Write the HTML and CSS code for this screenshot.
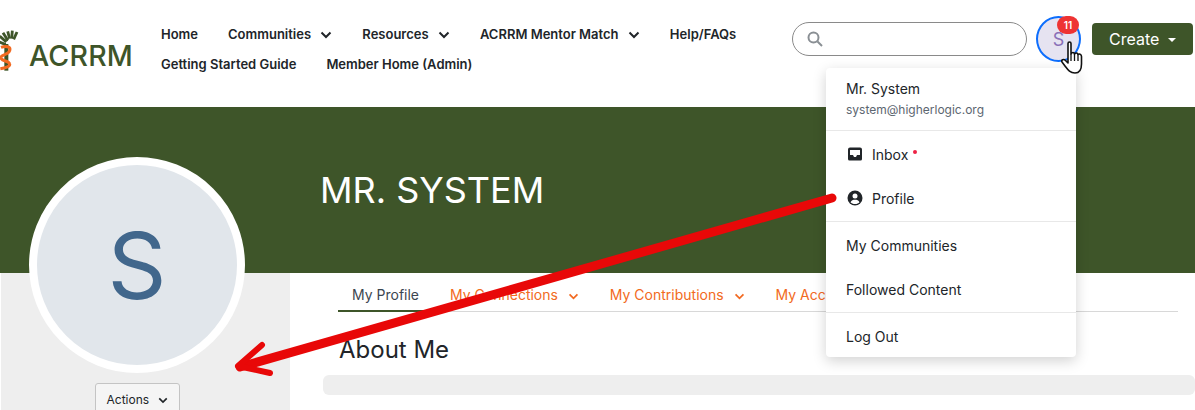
FILE: index.html
```html
<!DOCTYPE html>
<html lang="en">
<head>
<meta charset="UTF-8">
<title>Mr. System</title>
<link rel="stylesheet" href="styles.css">
</head>
<body>
<div class="page">
  <div class="header">
    <a class="logo" href="#">
      <svg width="48" height="64" viewBox="0 0 48 64">
        <g stroke="#3e5529" stroke-width="4.2" fill="none">
          <path d="M13 21 L1 16"/><path d="M14 17 L4 8"/><path d="M16 14 L9 3"/><path d="M19 12 L16 1"/>
          <path d="M22 12 L23 0"/><path d="M25 13 L30 2"/><path d="M17 14 L13 12"/>
        </g>
        <rect x="11" y="20" width="6" height="40" fill="#3e5529"/>
        <path d="M6 25 C14 22 21 24 19 30 C17 37 5 35 6 41 C7 46 18 45 19 50 C20 54 11 56 5 57" stroke="#f26a21" stroke-width="4.5" fill="none"/>
      </svg>
      <span class="logo-text">ACRRM</span>
    </a>
    <ul class="nav">
      <li><a href="#">Home</a></li>
      <li><a href="#">Communities <svg class="chev" width="12" height="8" viewBox="0 0 12 8"><path d="M1.5 1.5 L6 6 L10.5 1.5"/></svg></a></li>
      <li><a href="#">Resources <svg class="chev" width="12" height="8" viewBox="0 0 12 8"><path d="M1.5 1.5 L6 6 L10.5 1.5"/></svg></a></li>
      <li><a href="#">ACRRM Mentor Match <svg class="chev" width="12" height="8" viewBox="0 0 12 8"><path d="M1.5 1.5 L6 6 L10.5 1.5"/></svg></a></li>
      <li><a href="#">Help/FAQs</a></li>
      <li><a href="#">Getting Started Guide</a></li>
      <li><a href="#">Member Home (Admin)</a></li>
    </ul>
    <div class="search">
      <svg width="16" height="16" viewBox="0 0 16 16" fill="none" stroke="#8a8f94" stroke-width="2"><circle cx="6.5" cy="6.5" r="5"/><path d="M10.5 10.5 L15 15"/></svg>
    </div>
    <div class="user">
      <div class="user-circle">S</div>
      <span class="badge">11</span>
    </div>
    <button class="create">Create <span class="caret"></span></button>
  </div>

  <div class="banner">
    <h1>MR. SYSTEM</h1>
  </div>

  <div class="content">
    <div class="sidebar">
      <button class="actions">Actions <svg class="chev" width="10" height="7" viewBox="0 0 12 8"><path d="M1.5 1.5 L6 6 L10.5 1.5"/></svg></button>
    </div>
    <div class="main">
      <ul class="tabs">
        <li class="active"><a href="#">My Profile</a></li>
        <li><a href="#">My Connections <svg class="chev" width="11" height="7" viewBox="0 0 12 8"><path d="M1.5 1.5 L6 6 L10.5 1.5"/></svg></a></li>
        <li><a href="#">My Contributions <svg class="chev" width="11" height="7" viewBox="0 0 12 8"><path d="M1.5 1.5 L6 6 L10.5 1.5"/></svg></a></li>
        <li><a href="#">My Account <svg class="chev" width="11" height="7" viewBox="0 0 12 8"><path d="M1.5 1.5 L6 6 L10.5 1.5"/></svg></a></li>
      </ul>
      <h2>About Me</h2>
      <div class="about-box"></div>
    </div>
  </div>

  <div class="big-avatar">S</div>

  <div class="menu">
    <div class="menu-head">
      <div class="menu-name">Mr. System</div>
      <div class="menu-mail">system@higherlogic.org</div>
    </div>
    <div class="menu-group">
      <a href="#">
        <svg width="16" height="16" viewBox="0 0 16 16"><path fill="#212529" fill-rule="evenodd" d="M3 1.5h10a2 2 0 0 1 2 2V13a1.5 1.5 0 0 1-1.5 1.5h-11A1.5 1.5 0 0 1 1 13V3.500a2 2 0 0 1 2-2zM3 4v5h3l1 2h2l1-2h3V4z"/></svg>
        Inbox <span class="dot"></span>
      </a>
      <a href="#">
        <svg width="16" height="16" viewBox="0 0 16 16"><circle cx="8" cy="8" r="7.500" fill="#212529"/><circle cx="8" cy="6" r="2.500" fill="#fff"/><path d="M3.500 12.200C4.500 10.300 6 9.800 8 9.800s3.500.5 4.500 2.400C11.500 13.300 10 14 8 14s-3.500-.7-4.500-1.800z" fill="#fff"/></svg>
        Profile
      </a>
    </div>
    <div class="menu-group">
      <a href="#">My Communities</a>
      <a href="#">Followed Content</a>
    </div>
    <div class="menu-group">
      <a href="#">Log Out</a>
    </div>
  </div>

  <!-- annotations drawn on top of the screenshot -->
  <svg class="arrow" width="1195" height="410" viewBox="0 0 1195 410">
    <path d="M832 198 L240 367" stroke="#e80808" stroke-width="9" stroke-linecap="round" fill="none"/>
    <path d="M262 345 L238 366 L270 373" stroke="#e80808" stroke-width="6" stroke-linecap="round" stroke-linejoin="round" fill="none"/>
  </svg>
  <svg class="hand" width="26" height="34" viewBox="0 0 26 34">
    <path d="M7 2.500 C7 .5 10 .5 10 2.500 V13 C11 11 13 11 13.500 13 C14.500 11.500 16.500 11.500 17 13.500 C18 12.500 20.500 13 20.500 15.500 V23 C20.500 28 18.500 32 14 32 C9 32 7 29 4 25 L1 21 C0 19 2.500 17.500 4.500 19.500 L7 22 Z" fill="#fff" stroke="#111" stroke-width="1.600" stroke-linejoin="round"/>
    <path d="M10 13 V20 M13.500 13 V20 M17 13.500 V20" stroke="#111" stroke-width="1.300" fill="none"/>
  </svg>
</div>
</body>
</html>
```
FILE: styles.css
```css
* {
  box-sizing: border-box;
}
html, body {
  margin: 0;
  padding: 0;
  height: 410px;
  overflow: hidden;
}
body {
  font-family: Inter, "Liberation Sans", sans-serif;
  color: #212529;
  background: #fff;
}
a {
  text-decoration: none;
  color: inherit;
}
ul {
  list-style: none;
  margin: 0;
  padding: 0;
}
.page {
  position: relative;
  width: 1195px;
  height: 410px;
  overflow: hidden;
}
.chev {
  fill: none;
  stroke: currentColor;
  stroke-width: 2;
  margin-left: 6px;
}

/* header */
.header {
  height: 107px;
  display: flex;
  align-items: flex-start;
}
.logo {
  width: 161px;
  height: 107px;
  display: flex;
  align-items: flex-start;
  padding-top: 26px;
}
.logo svg {
  flex: none;
  margin-left: -3px;
  width: 32px;
  height: 52px;
}
.logo-text {
  font-size: 28.5px;
  font-weight: 500;
  color: #3e5529;
  margin-top: 14px;
  letter-spacing: 0.2px;
  line-height: 32px;
}
.nav {
  width: 631px;
  padding-top: 19px;
  display: flex;
  flex-wrap: wrap;
  column-gap: 30px;
  font-size: 13px;
  font-weight: 600;
  line-height: 30px;
}
.search {
  width: 235px;
  height: 34px;
  margin-top: 22px;
  border: 1px solid #8a8a8a;
  border-radius: 17px;
  display: flex;
  align-items: center;
  padding-left: 14px;
}
.user {
  position: relative;
  margin: 16px 11px 0 9px;
}
.user-circle {
  width: 45px;
  height: 46px;
  border: 2px solid #0d6efd;
  border-radius: 50%;
  background: #e6e3f1;
  color: #8a70b8;
  font-size: 18px;
  display: flex;
  align-items: center;
  justify-content: center;
}
.badge {
  position: absolute;
  top: 0;
  left: 21px;
  width: 22px;
  height: 18px;
  border-radius: 9px;
  background: #ee3333;
  color: #fff;
  font-size: 10px;
  font-weight: 600;
  line-height: 18px;
  text-align: center;
}
.create {
  width: 101px;
  height: 32px;
  margin-top: 23px;
  border: 0;
  border-radius: 4px;
  background: #3e5529;
  color: #fff;
  font-family: inherit;
  font-size: 16px;
}
.caret {
  display: inline-block;
  margin-left: 4px;
  vertical-align: 3px;
  border-top: 4px solid #fff;
  border-left: 4px solid transparent;
  border-right: 4px solid transparent;
}

/* banner */
.banner {
  height: 166px;
  background: #3e5529;
  padding: 61px 0 0 320px;
}
.banner h1 {
  margin: 0;
  color: #fff;
  font-size: 36px;
  font-weight: 400;
  line-height: 44px;
}

/* profile content */
.content {
  display: flex;
  height: 137px;
}
.sidebar {
  width: 289px;
  margin-left: 1px;
  background: #eee;
  padding: 110px 0 0 94px;
}
.actions {
  width: 85px;
  height: 32px;
  border: 1px solid #c4c4c4;
  border-radius: 3px;
  background: #f5f5f5;
  color: #212529;
  font-family: inherit;
  font-size: 12px;
}
.main {
  flex: 1;
  padding-left: 33px;
}
.tabs {
  width: 840px;
  height: 39px;
  display: flex;
  border-bottom: 1px solid #d8d8d8;
  color: #f26a21;
  font-size: 14px;
  line-height: 18px;
  padding-top: 13px;
  margin-left: 15px;
}
.tabs li {
  padding: 0 14px;
  margin-right: 1px;
  white-space: nowrap;
}
.tabs li + li {
  margin-left: 2px;
}
.tabs .active {
  color: #3c4650;
  border-bottom: 2px solid #3e5529;
  height: 26px;
}
.main h2 {
  margin: 0;
  padding: 23px 0 0 16px;
  font-size: 24px;
  font-weight: 400;
  line-height: 30px;
}
.about-box {
  height: 20px;
  margin-top: 10px;
  border-radius: 6px;
  background: #eee;
}

.big-avatar {
  position: absolute;
  left: 29px;
  top: 157px;
  width: 216px;
  height: 216px;
  border: 8px solid #fff;
  border-radius: 50%;
  background: #e1e6eb;
  color: #41678c;
  font-size: 92px;
  display: flex;
  align-items: center;
  justify-content: center;
}

/* user dropdown */
.menu {
  position: absolute;
  left: 826px;
  top: 68px;
  width: 250px;
  height: 289px;
  background: #fff;
  border-radius: 4px;
  box-shadow: 0 4px 14px rgba(0, 0, 0, 0.18);
  font-size: 14px;
}
.menu-head {
  height: 62px;
  padding: 12px 20px 0;
}
.menu-name {
  line-height: 18px;
}
.menu-mail {
  margin-top: 4px;
  font-size: 12px;
  line-height: 16px;
  color: #5c6670;
}
.menu-group {
  border-top: 1px solid #e8e8e8;
  padding: 1px 0;
}
.menu-group a {
  display: flex;
  align-items: center;
  gap: 9px;
  height: 44px;
  padding: 0 20px;
}
.menu-group svg {
  flex: none;
  margin-left: 1px;
}
.dot {
  width: 4px;
  height: 4px;
  border-radius: 50%;
  background: #ee2244;
  margin: -5px 0 0 -4px;
}

.arrow {
  position: absolute;
  left: 0;
  top: 0;
}
.hand {
  position: absolute;
  left: 1061px;
  top: 41px;
}
```
